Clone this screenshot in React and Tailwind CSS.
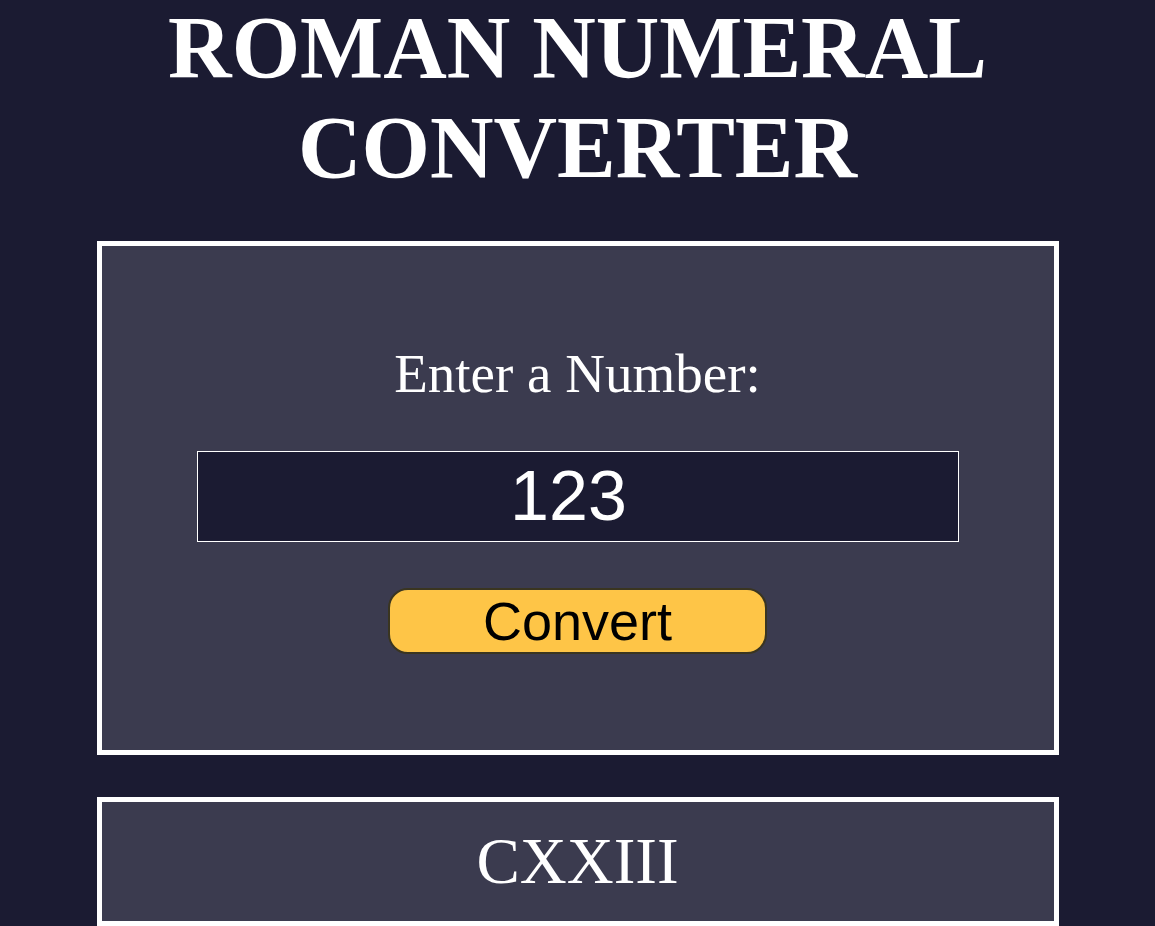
import React, { useState } from 'react';

const toRoman = (n) => {
  const table = [
    [1000, 'M'], [900, 'CM'], [500, 'D'], [400, 'CD'], [100, 'C'], [90, 'XC'],
    [50, 'L'], [40, 'XL'], [10, 'X'], [9, 'IX'], [5, 'V'], [4, 'IV'], [1, 'I'],
  ];
  let out = '';
  let rest = n;
  for (const [v, s] of table) {
    while (rest >= v) { out += s; rest -= v; }
  }
  return out;
};

export default function App() {
  const [value, setValue] = useState('123');
  const [result, setResult] = useState(toRoman(123));

  const convert = () => {
    const n = parseInt(value, 10);
    if (Number.isNaN(n)) setResult('Please enter a valid number');
    else if (n < 1) setResult('Please enter a number greater than or equal to 1');
    else if (n > 3999) setResult('Please enter a number less than or equal to 3999');
    else setResult(toRoman(n));
  };

  return (
    <div className="min-h-screen w-full bg-[#1b1b32] text-white font-['Liberation_Serif','Times_New_Roman',serif]">
      <h1 className="mt-[-2px] text-center text-[88px] font-bold leading-[100px]">
        ROMAN NUMERAL<br />CONVERTER
      </h1>

      {/* Form panel */}
      <div className="mx-auto mt-[43px] flex w-[962px] flex-col items-center border-[5px] border-white bg-[#3b3b4f] py-[96px]">
        <label htmlFor="number" className="text-[55px] leading-[63px]">Enter a Number:</label>
        <input
          id="number"
          type="number"
          value={value}
          onChange={(e) => setValue(e.target.value)}
          className="mt-[46px] h-[91px] w-[762px] border border-white bg-[#1b1b32] pr-[18px] text-center text-[70px] text-white outline-none font-['Liberation_Sans',Arial,sans-serif] [appearance:textfield] [&::-webkit-inner-spin-button]:appearance-none [&::-webkit-outer-spin-button]:appearance-none"
        />
        <button
          onClick={convert}
          className="mt-[46px] flex h-[66px] w-[379px] items-center justify-center rounded-[20px] border-2 border-[#3a3520] bg-[#fec547] text-[54px] leading-none text-black font-['Liberation_Sans',Arial,sans-serif]"
        >
          Convert
        </button>
      </div>

      {/* Output */}
      <div className="mx-auto mt-[42px] flex h-[129px] w-[962px] items-center justify-center border-[5px] border-white bg-[#3b3b4f]">
        <span className="text-[65px]">{result}</span>
      </div>
    </div>
  );
}
